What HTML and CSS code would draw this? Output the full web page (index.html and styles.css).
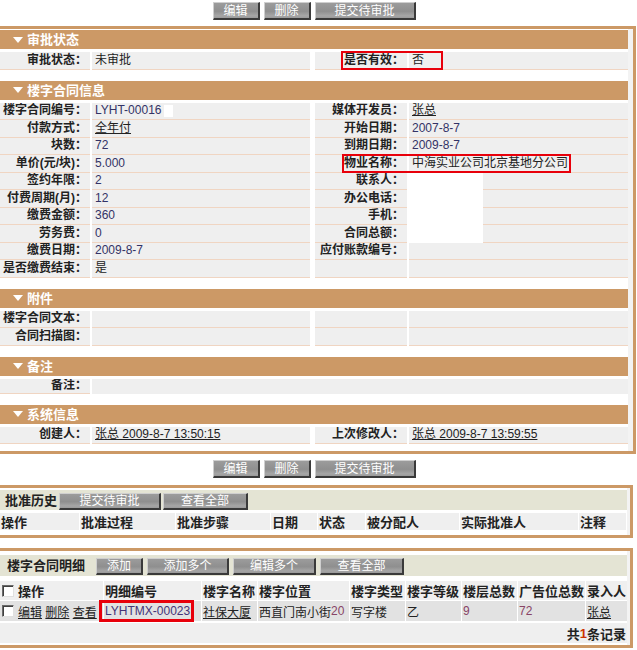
FILE: index.html
```html
<!DOCTYPE html>
<html>
<head>
<meta charset="utf-8">
<title>楼字合同</title>
<link rel="stylesheet" href="styles.css">
</head>
<body>
<div class="page">
  <div class="toolbar">
    <span class="btn w47">编辑</span><span class="btn w47">删除</span><span class="btn w101">提交待审批</span>
  </div>

  <div class="panel main">
    <div class="inner">
      <section class="sec">
        <div class="sec-head"><span class="tri"></span>审批状态</div>
        <div class="form">
          <div class="lbl">审批状态：</div><div class="val gap">未审批</div>
          <div class="lbl rel">是否有效：<span class="mark m1"></span></div><div class="val">否</div>
        </div>
      </section>

      <section class="sec">
        <div class="sec-head"><span class="tri"></span>楼字合同信息</div>
        <div class="form">
          <div class="lbl">楼字合同编号：</div><div class="val gap"><span class="num">LYHT-00016</span><span class="wbox"></span></div>
          <div class="lbl">媒体开发员：</div><div class="val"><a class="lnk">张总</a></div>

          <div class="lbl">付款方式：</div><div class="val gap"><a class="lnk">全年付</a></div>
          <div class="lbl">开始日期：</div><div class="val"><span class="num">2007-8-7</span></div>

          <div class="lbl">块数：</div><div class="val gap"><span class="num">72</span></div>
          <div class="lbl">到期日期：</div><div class="val"><span class="num">2009-8-7</span></div>

          <div class="lbl">单价(元/块)：</div><div class="val gap"><span class="num">5.000</span></div>
          <div class="lbl rel">物业名称：<span class="mark m2"></span></div><div class="val">中海实业公司北京基地分公司</div>

          <div class="lbl">签约年限：</div><div class="val gap"><span class="num">2</span></div>
          <div class="lbl">联系人：</div><div class="val blank-cell"><span class="blank"></span></div>

          <div class="lbl">付费周期(月)：</div><div class="val gap"><span class="num">12</span></div>
          <div class="lbl">办公电话：</div><div class="val blank-cell"><span class="blank"></span></div>

          <div class="lbl">缴费金额：</div><div class="val gap"><span class="num">360</span></div>
          <div class="lbl">手机：</div><div class="val blank-cell"><span class="blank"></span></div>

          <div class="lbl">劳务费：</div><div class="val gap"><span class="num">0</span></div>
          <div class="lbl">合同总额：</div><div class="val blank-cell"><span class="blank"></span></div>

          <div class="lbl">缴费日期：</div><div class="val gap"><span class="num">2009-8-7</span></div>
          <div class="lbl">应付账款编号：</div><div class="val"></div>

          <div class="lbl">是否缴费结束：</div><div class="val gap">是</div>
          <div class="lbl"></div><div class="val"></div>
        </div>
      </section>

      <section class="sec">
        <div class="sec-head"><span class="tri"></span>附件</div>
        <div class="form">
          <div class="lbl">楼字合同文本：</div><div class="val gap"></div>
          <div class="lbl"></div><div class="val"></div>
          <div class="lbl">合同扫描图：</div><div class="val gap"></div>
          <div class="lbl"></div><div class="val"></div>
        </div>
      </section>

      <section class="sec">
        <div class="sec-head"><span class="tri"></span>备注</div>
        <div class="form note">
          <div class="lbl">备注：</div><div class="val wide"></div>
        </div>
      </section>

      <section class="sec last">
        <div class="sec-head"><span class="tri"></span>系统信息</div>
        <div class="form">
          <div class="lbl">创建人：</div><div class="val gap"><a class="lnk">张总 2009-8-7 13:50:15</a></div>
          <div class="lbl">上次修改人：</div><div class="val"><a class="lnk">张总 2009-8-7 13:59:55</a></div>
        </div>
      </section>
    </div>
  </div>

  <div class="toolbar t2">
    <span class="btn w47">编辑</span><span class="btn w47">删除</span><span class="btn w101">提交待审批</span>
  </div>

  <div class="panel sub hist">
    <div class="inner">
      <div class="bar">
        <b class="bar-title">批准历史</b>
        <span class="btn w102">提交待审批</span><span class="btn w85">查看全部</span>
      </div>
      <div class="grid hist-cols head">
        <div>操作</div><div>批准过程</div><div>批准步骤</div><div>日期</div><div>状态</div><div>被分配人</div><div>实际批准人</div><div>注释</div>
      </div>
    </div>
  </div>

  <div class="panel sub detail">
    <div class="inner">
      <div class="bar b2">
        <b class="bar-title">楼字合同明细</b>
        <span class="btn w47">添加</span><span class="btn w82">添加多个</span><span class="btn w83">编辑多个</span><span class="btn w84">查看全部</span>
      </div>
      <div class="grid det-cols head">
        <div class="cb-cell"><span class="cb"></span><span>操作</span></div><div>明细编号</div><div>楼字名称</div><div>楼字位置</div><div>楼字类型</div><div>楼字等级</div><div>楼层总数</div><div>广告位总数</div><div>录入人</div>
      </div>
      <div class="grid det-cols data">
        <div class="cb-cell"><span class="cb"></span><span class="ops"><a class="lnk">编辑</a> <a class="lnk">删除</a> <a class="lnk">查看</a></span></div>
        <div class="rel"><span class="code">LYHTMX-00023</span><span class="mark m3"></span></div>
        <div><a class="lnk">社保大厦</a></div>
        <div>西直门南小街<span class="red">20</span></div>
        <div>写字楼</div>
        <div>乙</div>
        <div><span class="red">9</span></div>
        <div><span class="red">72</span></div>
        <div><a class="lnk">张总</a></div>
      </div>
      <div class="foot">共<span class="one">1</span>条记录</div>
    </div>
  </div>
</div>
</body>
</html>
```

FILE: styles.css
```css
* { box-sizing: border-box; }

body {
  margin: 0;
  background: #fff;
  font-family: "Liberation Sans", "Noto Sans CJK SC", sans-serif;
  font-size: 12px;
  color: #222;
}

.page { width: 637px; }

/* toolbars */
.toolbar {
  width: 628px;
  height: 26px;
  padding-top: 2px;
  display: flex;
  justify-content: center;
  gap: 4px;
}
.toolbar.t2 { height: 31px; padding-top: 6px; }

.btn {
  display: inline-flex;
  align-items: center;
  justify-content: center;
  height: 18px;
  color: #fff;
  font-size: 12px;
  line-height: 14px;
  background: linear-gradient(#9c9c9c 0%, #8f8f8f 55%, #a6a6a6 85%, #9a9a9a 100%);
  border-top: 1px solid #cfcfcf;
  border-left: 1px solid #cfcfcf;
  border-right: 2px solid #3a3a3a;
  border-bottom: 2px solid #3a3a3a;
}
.w47 { width: 47px; }
.w82 { width: 82px; }
.w83 { width: 83px; }
.w84 { width: 84px; }
.w85 { width: 85px; }
.w101 { width: 101px; }
.w102 { width: 102px; }

/* panels */
.panel {
  border-top: 3px solid #cc9966;
  border-right: 3px solid #cc9966;
  border-bottom: 3px solid #cc9966;
}
.main { width: 636px; }
.main > .inner {
  border-right: 5px solid #f3f3f3;
  padding-top: 1px;
  padding-bottom: 7px;
}

.sec { margin-bottom: 11px; }
.sec.last { margin-bottom: 0; }

.sec-head {
  height: 19px;
  background: #cc9966;
  color: #fff;
  font-weight: bold;
  font-size: 13px;
  line-height: 19px;
  display: flex;
  align-items: center;
  margin-bottom: 3px;
}
.tri {
  width: 0;
  height: 0;
  border-left: 5px solid transparent;
  border-right: 5px solid transparent;
  border-top: 6px solid #fff;
  margin: 0 4px 0 13px;
}

.form {
  display: grid;
  grid-template-columns: 90px 221px 92px 219px;
  column-gap: 2px;
  grid-auto-rows: 17.5px;
}
.lbl, .val {
  background: #efefef;
  border-bottom: 1px solid #f0d5c2;
  display: flex;
  align-items: center;
  white-space: nowrap;
  line-height: 15px;
}
.lbl {
  justify-content: flex-end;
  padding-right: 3px;
  font-weight: bold;
  color: #222;
  overflow: hidden;
}
.lbl.rel { overflow: visible; position: relative; }
.val { padding-left: 3px; }
.val.gap { margin-right: 3px; }

.note { grid-auto-rows: 15px; }
.val.wide { grid-column: 2 / 5; border-bottom: none; }

.num { color: #333366; }
.lnk { color: #222; text-decoration: underline; }

.wbox {
  display: inline-block;
  width: 9px;
  height: 12px;
  background: #fff;
  margin-left: 2px;
}
.val.blank-cell { padding-left: 0; align-items: flex-start; }
.blank {
  display: block;
  width: 74px;
  height: 17.5px;
  background: #fff;
}

.mark {
  position: absolute;
  border: 2px solid #e8000b;
  pointer-events: none;
}
.m1 { left: 26px; top: -1px; width: 102px; height: 19px; }
.m2 { left: 27px; top: -1px; width: 229px; height: 19px; }
.m3 { left: -5px; top: -1px; width: 95px; height: 22px; border-width: 3px; }

/* sub panels */
.sub { width: 633px; }
.sub > .inner {
  border-right: 3px solid #f3f3f3;
}
.hist > .inner { padding-top: 2px; padding-bottom: 5px; }
.detail { margin-top: 10px; }
.detail > .inner { padding-top: 4px; padding-bottom: 2px; }

.bar {
  height: 20px;
  background: #e4e4d4;
  display: flex;
  align-items: flex-end;
  gap: 2px;
  padding-left: 5px;
  margin-bottom: 3px;
}
.bar .btn { height: 17px; }
.bar.b2 { height: 21px; gap: 4px; margin-bottom: 5px; padding-left: 7px; padding-bottom: 1px; }
.bar-title {
  font-size: 13px;
  font-weight: bold;
  color: #222;
  line-height: 18px;
  align-self: flex-end;
}
.bar.b2 .bar-title { margin-right: 7px; }

.grid {
  display: grid;
  column-gap: 1px;
}
.grid > div {
  display: flex;
  align-items: center;
  white-space: nowrap;
  overflow: hidden;
  padding-left: 1px;
}
.grid.head > div {
  background: #efefef;
  font-weight: bold;
  font-size: 13px;
}
.hist-cols {
  grid-template-columns: 79px 95px 94px 46px 47px 93px 118px 47px;
  height: 17px;
}
.det-cols {
  grid-template-columns: 103px 97px 55px 91px 55px 55px 55px 67px 41px;
}
.det-cols.head { height: 19px; margin-bottom: 1px; }
.det-cols.data { height: 20px; margin-bottom: 2px; }
.det-cols.data > div { background: #e2e2e2; font-size: 12px; }
.grid > div.rel { position: relative; overflow: visible; }

.grid > div.cb-cell { padding-left: 2px; }
.cb {
  display: inline-block;
  width: 12px;
  height: 12px;
  margin-right: 4px;
  background: #fff;
  border: 1px solid;
  border-color: #6a6a6a #e0e0e0 #e0e0e0 #6a6a6a;
  box-shadow: inset 1px 1px 0 #404040;
  flex: none;
}
.ops { white-space: nowrap; word-spacing: 0; }
.code { color: #443377; }
.red { color: #884466; }

.foot {
  height: 20px;
  background: #efefef;
  display: flex;
  align-items: center;
  justify-content: flex-end;
  padding-right: 1px;
  font-weight: bold;
  font-size: 13px;
}
.one { color: #cc3300; }
```
